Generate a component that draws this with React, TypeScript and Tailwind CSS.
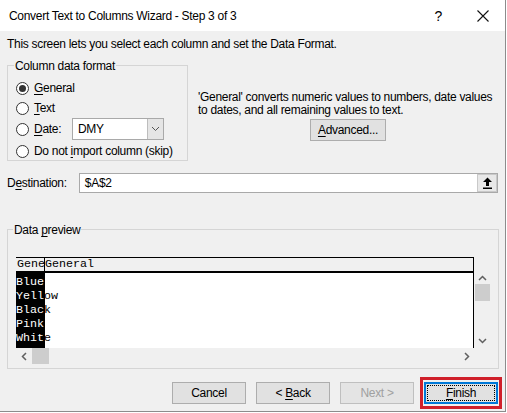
import React from "react";

const U = ({ c }: { c: string }) => <span className="underline underline-offset-[2px] decoration-[1px]">{c}</span>;

function Radio({ checked }: { checked?: boolean }) {
  return (
    <span className="w-[13px] h-[13px] rounded-full border border-[#333] bg-white flex items-center justify-center shrink-0">
      {checked && <span className="w-[7px] h-[7px] rounded-full bg-[#333]" />}
    </span>
  );
}

function Btn({ children, disabled }: { children: React.ReactNode; disabled?: boolean }) {
  return (
    <div
      className={`w-[74px] h-[22px] flex items-center justify-center border ${
        disabled ? "text-[#a0a0a0] border-[#bfbfbf] bg-[#e4e4e4]" : "text-black bg-[#e1e1e1] border-[#adadad]"
      }`}
    >
      {children}
    </div>
  );
}

const rows = ["Blue", "Yellow", "Black", "Pink", "White"];

export default function App() {
  return (
    <div className="w-[506px] h-[412px] bg-[#f0f0f0] border-r border-b border-[#8c8c8c] font-['Liberation_Sans',Arial,sans-serif] text-[12px] tracking-[-0.3px] text-black flex flex-col">
      {/* title bar */}
      <div className="h-[31px] bg-white flex items-center shrink-0">
        <span className="ml-[9px] text-[12px] leading-none">Convert Text to Columns Wizard - Step 3 of 3</span>
        <span className="ml-auto mr-[34px] text-[14px] leading-none">?</span>
        <svg width="14" height="14" viewBox="0 0 14 14" className="mr-[15px]">
          <path d="M1.5 1.5 L12.5 12.5 M12.5 1.5 L1.5 12.5" stroke="#111" strokeWidth="1.1" />
        </svg>
      </div>

      <div className="px-[7px] flex flex-col">
        <p className="mt-[5px] leading-[16px]">This screen lets you select each column and set the Data Format.</p>

        <div className="mt-[13px] flex">
          {/* group box */}
          <div className="relative w-[181px] h-[96px] border border-[#d5d5d5] shrink-0">
            <span className="absolute -top-[8px] left-[6px] bg-[#f0f0f0] px-[1px] leading-[16px]">Column data format</span>
            <div className="flex flex-col pl-[8px] pt-[14px]">
              <div className="flex items-center h-[16px]">
                <Radio checked />
                <span className="ml-[5px]"><U c="G" />eneral</span>
              </div>
              <div className="flex items-center h-[16px] mt-[4px]">
                <Radio />
                <span className="ml-[5px]"><U c="T" />ext</span>
              </div>
              <div className="flex items-center h-[22px] mt-[2px]">
                <Radio />
                <span className="ml-[5px] w-[38px]"><U c="D" />ate:</span>
                <div className="w-[92px] h-[22px] bg-white border border-[#a9a9a9] flex items-center">
                  <span className="ml-[5px] flex-1">DMY</span>
                  <div className="w-[16px] h-full bg-[#e5e5e5] border-l border-[#bdbdbd] flex items-center justify-center">
                    <svg width="9" height="6" viewBox="0 0 9 6">
                      <path d="M1 1 L4.5 4.5 L8 1" stroke="#555" strokeWidth="1" fill="none" />
                    </svg>
                  </div>
                </div>
              </div>
              <div className="flex items-center h-[16px] mt-[3px]">
                <Radio />
                <span className="ml-[5px]">Do not <U c="i" />mport column (skip)</span>
              </div>
            </div>
          </div>

          {/* description */}
          <div className="ml-[10px] w-[300px] flex flex-col items-center">
            <p className="mt-[26px] leading-[13px] self-start whitespace-nowrap">
              'General' converts numeric values to numbers, date values
              <br />
              to dates, and all remaining values to text.
            </p>
            <div className="mt-[2px] w-[76px] h-[22px] bg-[#e1e1e1] border border-[#adadad] flex items-center justify-center">
              <span><U c="A" />dvanced...</span>
            </div>
          </div>
        </div>

        {/* destination */}
        <div className="mt-[12px] flex items-center">
          <span className="w-[72px]">D<U c="e" />stination:</span>
          <div className="w-[420px] h-[20px] bg-white border border-[#a9a9a9] flex items-center">
            <span className="ml-[5px] flex-1">$A$2</span>
            <div className="w-[20px] h-[18px] bg-[#e8e8e8] border border-[#c9c9c9] flex items-center justify-center">
              <svg width="11" height="12" viewBox="0 0 11 12">
                <path d="M5.5 0.5 L10 5 L7 5 L7 9 L4 9 L4 5 L1 5 Z" fill="#000" />
                <rect x="1" y="10.5" width="9" height="1.5" fill="#000" />
              </svg>
            </div>
          </div>
        </div>

        {/* data preview */}
        <div className="relative mt-[36px] w-[492px] h-[140px] border border-[#d5d5d5]">
          <span className="absolute -top-[8px] left-[5px] bg-[#f0f0f0] px-[1px] leading-[16px]">Data <U c="p" />review</span>
          <div className="ml-[8px] mt-[27px] flex flex-col w-[474px]">
            <div className="flex">
              <div className="relative w-[458px] h-[91px] border-t border-r border-black bg-white overflow-hidden font-['Liberation_Mono','Courier_New',monospace] text-[11.67px] tracking-normal">
                {/* header */}
                <div className="h-[15px] bg-[#f0f0f0] border-b-2 border-l border-black leading-[13px] whitespace-pre -ml-px pl-px">
                  GeneGeneral
                </div>
                <div className="relative pt-[2px]">
                  <div className="absolute left-0 top-0 w-[28px] h-[80px] bg-black" />
                  {rows.map((r) => (
                    <div key={r} className="relative h-[14px] leading-[14px] whitespace-pre">
                      <span>{r}</span>
                      <div className="absolute left-0 top-0 w-[28px] h-[14px] overflow-hidden text-white">{r}</div>
                    </div>
                  ))}
                </div>
                <div className="absolute left-[28px] top-0 w-px h-[91px] bg-black" />
              </div>
              {/* vertical scrollbar */}
              <div className="w-[16px] h-[91px] bg-[#f0f0f0] flex flex-col items-center">
                <div className="mt-[18px]">
                  <svg width="9" height="6" viewBox="0 0 9 6">
                    <path d="M1 5 L4.5 1.5 L8 5" stroke="#606060" strokeWidth="1.5" fill="none" />
                  </svg>
                </div>
                <div className="mt-[3px] w-[15px] h-[17px] bg-[#cdcdcd]" />
                <div className="mt-auto mb-[4px]">
                  <svg width="9" height="6" viewBox="0 0 9 6">
                    <path d="M1 1 L4.5 4.5 L8 1" stroke="#606060" strokeWidth="1.5" fill="none" />
                  </svg>
                </div>
              </div>
            </div>
            {/* horizontal scrollbar */}
            <div className="w-[458px] h-[16px] bg-[#f0f0f0] flex items-center">
              <svg width="6" height="9" viewBox="0 0 6 9" className="ml-[5px]">
                <path d="M5 1 L1.5 4.5 L5 8" stroke="#606060" strokeWidth="1.5" fill="none" />
              </svg>
              <div className="ml-[5px] w-[17px] h-[16px] bg-[#cdcdcd]" />
              <svg width="6" height="9" viewBox="0 0 6 9" className="ml-auto mr-[4px]">
                <path d="M1 1 L4.5 4.5 L1 8" stroke="#606060" strokeWidth="1.5" fill="none" />
              </svg>
            </div>
          </div>
        </div>

        {/* buttons */}
        <div className="mt-[13px] flex justify-end gap-[10px]">
          <Btn>Cancel</Btn>
          <Btn>
            <span>&lt; <U c="B" />ack</span>
          </Btn>
          <Btn disabled>Next &gt;</Btn>
          <div className="relative">
            <div className="absolute -left-[4px] -right-[4px] -top-[5px] -bottom-[5px] border-[3px] border-[#d0202b]" />
            <div className="relative w-[74px] h-[22px] bg-[#e1e1e1] border-2 border-[#0078d7] flex items-center justify-center">
              <div className="absolute inset-[1px] border border-dotted border-black" />
              <span><U c="F" />inish</span>
            </div>
          </div>
        </div>
      </div>
    </div>
  );
}
